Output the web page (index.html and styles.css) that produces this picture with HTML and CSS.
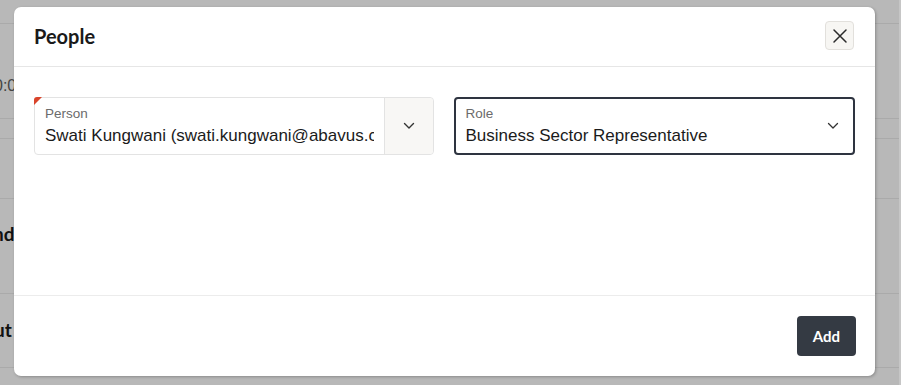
FILE: index.html
```html
<!DOCTYPE html>
<html>
<head>
<meta charset="utf-8">
<link rel="stylesheet" href="styles.css">
</head>
<body>
<div class="page">
  <div class="row r1"></div>
  <div class="row r2"><span class="bg-time">0:0</span></div>
  <div class="row r3"></div>
  <div class="row r4"></div>
  <div class="row r5"><span class="bg-bold">nd</span></div>
  <div class="row r6"><span class="bg-bold">ut</span></div>
  <div class="row r7"></div>
</div>
<div class="scrollbar"></div>
<div class="modal">
  <div class="modal-header">
    <h2 class="modal-title">People</h2>
    <button class="close-btn" aria-label="Close">
      <svg width="16" height="16" viewBox="0 0 16 16"><path d="M2 2L14 14M14 2L2 14" stroke="#2b2b2b" stroke-width="1.5" stroke-linecap="round" fill="none"/></svg>
    </button>
  </div>
  <div class="modal-body">
    <div class="field person">
      <span class="req"></span>
      <div class="field-main">
        <div class="field-label">Person</div>
        <div class="field-value">Swati Kungwani (swati.kungwani@abavus.com)</div>
      </div>
      <div class="field-toggle">
        <svg width="12" height="8" viewBox="0 0 12 8"><path d="M1.5 1.5L6 6L10.5 1.5" stroke="#333" stroke-width="1.4" fill="none" stroke-linecap="round" stroke-linejoin="round"/></svg>
      </div>
    </div>
    <div class="field role">
      <div class="field-main">
        <div class="field-label">Role</div>
        <div class="field-value">Business Sector Representative</div>
      </div>
      <div class="role-chev">
        <svg width="12" height="8" viewBox="0 0 12 8"><path d="M1.5 1.5L6 6L10.5 1.5" stroke="#333" stroke-width="1.3" fill="none" stroke-linecap="round" stroke-linejoin="round"/></svg>
      </div>
    </div>
  </div>
  <div class="modal-footer">
    <button class="add-btn">Add</button>
  </div>
</div>
</body>
</html>
```
FILE: styles.css
```css
html, body {
  margin: 0;
  padding: 0;
  width: 901px;
  height: 385px;
  overflow: hidden;
  background: #b8b8b8;
  font-family: "Liberation Sans", Arial, sans-serif;
}
.page {
  display: flex;
  flex-direction: column;
}
.row {
  border-bottom: 1px solid #aaaaaa;
  display: flex;
  align-items: center;
  box-sizing: border-box;
  overflow: hidden;
}
.r1 { height: 24px; }
.r2 { height: 95px; }
.r3 { height: 20px; }
.r4 { height: 60px; }
.r5 { height: 95px; }
.r6 { height: 74px; }
.r7 { height: 30px; border-bottom: none; }
.bg-time {
  font-size: 16px;
  color: #444;
  margin-left: -6px;
  margin-top: 30px;
}
.bg-bold {
  font-family: "Lato", sans-serif;
  font-weight: 700;
  font-size: 19px;
  color: #111;
  margin-left: -7px;
  margin-top: -26px;
}
.r6 .bg-bold { margin-left: -6px; margin-top: -2px; }
.scrollbar {
  position: absolute;
  right: 0;
  top: 0;
  width: 2px;
  height: 385px;
  background: #c6c6c6;
}
.modal {
  position: absolute;
  left: 14px;
  top: 7px;
  width: 861px;
  height: 369px;
  background: #fff;
  border-radius: 7px;
  box-shadow: 1px 1px 3px rgba(0,0,0,0.25);
  display: flex;
  flex-direction: column;
  box-sizing: border-box;
}
.modal-header {
  height: 60px;
  box-sizing: border-box;
  border-bottom: 1px solid #e6e6e6;
  display: flex;
  align-items: center;
  justify-content: space-between;
  padding: 0 20px;
}
.modal-title {
  margin: 0;
  font-family: "Lato", sans-serif;
  font-weight: 700;
  font-size: 20px;
  color: #1a1a1a;
  margin-top: -2px;
}
.close-btn {
  width: 29px;
  height: 29px;
  box-sizing: border-box;
  border: 1px solid #e2e0dc;
  background: #f7f6f3;
  border-radius: 4px;
  display: flex;
  align-items: center;
  justify-content: center;
  padding: 0;
  margin-top: -2px;
  margin-right: 1px;
}
.modal-body {
  flex: 1;
  display: flex;
  gap: 20px;
  padding: 30px 20px 0;
  align-items: flex-start;
  border-bottom: 1px solid #ececec;
}
.field {
  position: relative;
  flex: 1 1 0;
  min-width: 0;
  height: 58px;
  box-sizing: border-box;
  display: flex;
  border-radius: 4px;
  background: #fff;
}
.person {
  border: 1px solid #e3e3e3;
}
.role {
  border: 2px solid #2e3440;
}
.req {
  position: absolute;
  left: -1px;
  top: -1px;
  width: 0;
  height: 0;
  border-top: 8px solid #d9442b;
  border-right: 8px solid transparent;
  border-top-left-radius: 3px;
}
.field-main {
  flex: 1;
  min-width: 0;
  padding: 8px 10px 0 10px;
}
.role .field-main { padding: 7px 0 0 10px; }
.field-label {
  font-size: 13.5px;
  color: #6b6b6b;
  line-height: 16px;
}
.field-value {
  font-size: 17px;
  color: #1b1b1b;
  line-height: 20px;
  margin-top: 4px;
  white-space: nowrap;
  overflow: hidden;
}
.field-toggle {
  width: 48px;
  flex: none;
  background: #f8f7f5;
  border-left: 1px solid #e3e3e3;
  border-radius: 0 4px 4px 0;
  display: flex;
  align-items: center;
  justify-content: center;
}
.role-chev {
  width: 40px;
  flex: none;
  display: flex;
  align-items: center;
  justify-content: center;
  margin-top: -1px;
}
.modal-footer {
  height: 80px;
  display: flex;
  align-items: center;
  justify-content: flex-end;
  padding: 0 19px;
}
.add-btn {
  width: 59px;
  height: 40px;
  background: #343a43;
  color: #fff;
  border: none;
  border-radius: 4px;
  font-family: "Lato", sans-serif;
  font-weight: 700;
  font-size: 15px;
  padding: 0;
}
```
